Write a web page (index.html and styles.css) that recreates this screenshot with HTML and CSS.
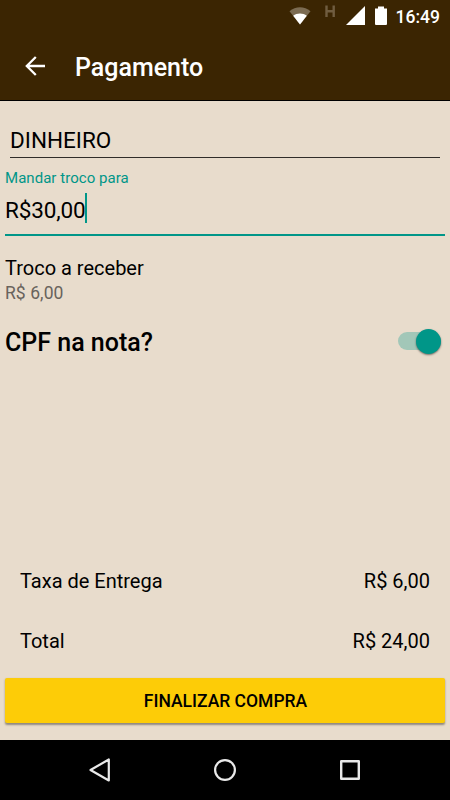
FILE: index.html
```html
<!DOCTYPE html>
<html lang="pt-BR">
<head>
<meta charset="utf-8">
<title>Pagamento</title>
<link rel="stylesheet" href="styles.css">
</head>
<body>
<header class="header">
  <div class="status">
    <svg class="status-icons" width="120" height="32" viewBox="0 0 120 32">
      <path fill="#7b6b52" d="M11 24.5 0.5 11.2C6.5 5.8 15.500 5.800 21.500 11.200Z"/>
      <path fill="#fff" d="M11 24.500 4.200 15.800C8 12.700 14 12.700 17.800 15.800Z"/>
      <path fill="none" stroke="#705d40" stroke-width="2.400" d="M37.500 5.500v11.500M44.700 5.500v11.500M37.500 11.300h7"/>
      <path fill="#fff" d="M57 25 76 6v19ZM86 8.500h3V6.500h6v2h3V24q0 1-1 1H87q-1 0-1-1Z"/>
    </svg>
    <span class="clock">16:49</span>
  </div>
  <div class="toolbar">
    <svg class="back" width="20" height="20" viewBox="0 0 20 20"><path fill="none" stroke="#fff" stroke-width="2.300" d="M20 10H2M10.800 1 1.800 10l9 9"/></svg>
    <h1 class="title">Pagamento</h1>
  </div>
</header>
<main class="content">
  <div class="method">DINHEIRO</div>
  <label class="hint">Mandar troco para</label>
  <div class="amount"><span>R$30,00</span><i class="caret"></i></div>
  <div class="change-label">Troco a receber</div>
  <div class="change-value">R$ 6,00</div>
  <div class="cpf"><span>CPF na nota?</span><div class="switch"><div class="thumb"></div></div></div>
  <div class="summary">
    <div class="row"><span>Taxa de Entrega</span><span>R$ 6,00</span></div>
    <div class="row"><span>Total</span><span>R$ 24,00</span></div>
  </div>
  <button class="submit">FINALIZAR COMPRA</button>
</main>
<nav class="nav">
  <svg width="24" height="26" viewBox="0 0 24 26"><path fill="none" stroke="#e9e9e9" stroke-width="2.200" stroke-linejoin="round" d="M20.800 2.500v21L2.500 13Z"/></svg>
  <svg width="24" height="26" viewBox="0 0 24 26"><circle cx="12" cy="13" r="9.900" fill="none" stroke="#e9e9e9" stroke-width="2.200"/></svg>
  <svg width="24" height="26" viewBox="0 0 24 26"><rect x="3.200" y="4.200" width="17.600" height="17.600" fill="none" stroke="#e9e9e9" stroke-width="2.400" stroke-linejoin="round"/></svg>
</nav>
</body>
</html>
```
FILE: styles.css
```css
* { box-sizing: border-box; }
body {
  margin: 0;
  width: 450px;
  height: 800px;
  display: flex;
  flex-direction: column;
  overflow: hidden;
  background: #e8dccc;
  color: #000;
  font-family: Roboto, sans-serif;
}
.header { height: 101px; background: #3b2502; color: #fff; border-bottom: 1px solid #000; }
.status { height: 32px; display: flex; justify-content: flex-end; padding-right: 10px; }
.status-icons { margin-right: -13px; }
.clock { font-size: 17.5px; font-weight: 500; line-height: 34px; }
.toolbar { height: 68px; display: flex; align-items: center; padding-left: 25px; }
.back { margin-right: 30px; }
.title { margin: 4px 0 0; font-size: 25px; font-weight: 500; line-height: 30px; }
.content { height: 639px; display: flex; flex-direction: column; padding: 24px 5px 17px; }
.method {
  height: 33px;
  margin: 0 5px;
  font-size: 22.5px;
  line-height: 30px;
  border-bottom: 1px solid #302d29;
}
.hint { margin-top: 11px; font-size: 15px; line-height: 18px; letter-spacing: .04px; color: #009688; }
.amount {
  height: 49px;
  display: flex;
  align-items: flex-start;
  padding-top: 6px;
  font-size: 22.5px;
  line-height: 34px;
  letter-spacing: -.15px;
  border-bottom: 2px solid #009688;
}
.caret { width: 2px; height: 30px; background: #009688; }
.change-label { margin-top: 20px; font-size: 20px; line-height: 24px; }
.change-value { margin-top: 2px; font-size: 17.5px; line-height: 22px; letter-spacing: .08px; color: #69635c; }
.cpf {
  margin-top: 24px;
  height: 30px;
  display: flex;
  justify-content: space-between;
  font-size: 25px;
  font-weight: 500;
  line-height: 30px;
}
.switch {
  display: flex;
  justify-content: flex-end;
  align-items: center;
  width: 43px;
  height: 18px;
  margin: 4px 4px 0 0;
  border-radius: 9px;
  background: #a2c7b8;
}
.thumb { width: 25px; height: 25px; border-radius: 50%; background: #009688; box-shadow: 0 1px 2px rgba(0, 0, 0, .5); }
.summary { margin-top: auto; padding: 0 15px; }
.row { height: 60px; display: flex; justify-content: space-between; font-size: 20px; line-height: 24px; }
.row + .row { height: 49px; }
.submit {
  height: 45px;
  border: 0;
  border-radius: 2px;
  background: #fdcc07;
  color: #000;
  font: 500 17.5px/47px Roboto, sans-serif;
  padding: 0 0 0 1px;
  box-shadow: 0 1.5px 2px rgba(0, 0, 0, .38);
}
.nav { height: 60px; display: flex; justify-content: center; align-items: center; gap: 101px; background: #000; }
```
